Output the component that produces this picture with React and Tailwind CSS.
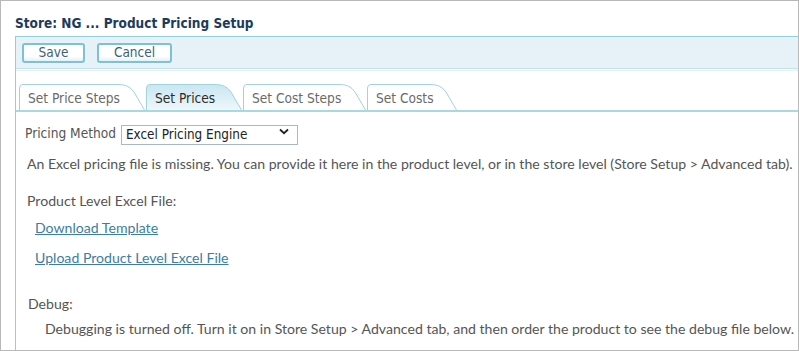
import { useState } from "react";

function Tab({ label, active, width }) {
    return (
        <div className="relative h-[26px]" style={{ width }}>
            <svg className="absolute inset-0" width={width} height="26" viewBox={`0 0 ${width} 26`}>
                <defs>
                    <linearGradient id="tabActive" x1="0" y1="0" x2="0" y2="1">
                        <stop offset="0" stopColor="#c9e6f1" />
                        <stop offset="1" stopColor="#eef7fb" />
                    </linearGradient>
                </defs>
                <path
                    d={`M0.5 26 L0.5 4 Q0.5 0.5 4 0.5 L${width - 26} 0.5 Q${width - 16} 0.5 ${width - 11} 8 L${width - 0.5} 26`}
                    fill={active ? "url(#tabActive)" : "#ffffff"}
                    stroke="#9fd3df"
                    strokeWidth="1"
                />
            </svg>
            <span
                className={`relative block pl-[9px] pt-[6px] text-[13.6px] leading-[16px] font-['DejaVu_Sans_Condensed','DejaVu_Sans',sans-serif] ${active ? "text-[#2c2c2c]" : "text-[#6a6a6a]"}`}
            >
                {label}
            </span>
        </div>
    );
}

export default function App() {
    const [method, setMethod] = useState("excel");

    return (
        <div className="w-[799px] h-[351px] border border-[#b8b8b8] bg-white overflow-hidden flex flex-col">
            {/* TITLE */}
            <div className="h-[35px] pl-[14px] pt-[15px]">
                <h1 className="text-[13.5px] leading-[15px] font-bold text-[#1d3b5c] font-['DejaVu_Sans_Condensed','DejaVu_Sans',sans-serif]">
                    Store: NG ... Product Pricing Setup
                </h1>
            </div>

            {/* PANEL */}
            <div className="ml-[14px] flex-1 border-l border-t border-[#8fd0de] flex flex-col">
                {/* TOOLBAR */}
                <div className="h-[31px] bg-[#e7f2f8] flex items-center gap-[12px] pl-[6px] pt-[1px]">
                    <button className="w-[63px] h-[20px] rounded-[3px] border-2 border-[#7cc2d4] bg-[linear-gradient(#ffffff_70%,#e3f1f6)] text-[13.5px] leading-none text-[#3d5f78] font-['DejaVu_Sans_Condensed','DejaVu_Sans',sans-serif]">
                        Save
                    </button>
                    <button className="w-[75px] h-[20px] rounded-[3px] border-2 border-[#7cc2d4] bg-[linear-gradient(#ffffff_70%,#e3f1f6)] text-[13.5px] leading-none text-[#3d5f78] font-['DejaVu_Sans_Condensed','DejaVu_Sans',sans-serif]">
                        Cancel
                    </button>
                </div>
                <div className="h-[1px] bg-[#c3e2eb]" />
                <div className="h-[1px] bg-white" />
                <div className="h-[1px] bg-[#e3f1f6]" />

                {/* TABS */}
                <div className="flex gap-[1px] pl-[3px] pt-[13px] border-b-2 border-[#a7d9e3]">
                    <Tab label="Set Price Steps" width={126} />
                    <Tab label="Set Prices" width={96} active />
                    <Tab label="Set Cost Steps" width={123} />
                    <Tab label="Set Costs" width={90} />
                </div>

                {/* CONTENT */}
                <div className="pl-[9px] pt-[11px] text-[#555] font-['Lato',sans-serif]">
                    <div className="flex items-center gap-[5px] h-[20px]">
                        <span className="text-[13.6px] text-[#555] font-['DejaVu_Sans_Condensed','DejaVu_Sans',sans-serif]">
                            Pricing Method
                        </span>
                        <div className="relative">
                            <select
                                value={method}
                                onChange={(e) => setMethod(e.target.value)}
                                className="appearance-none w-[177px] h-[20px] border border-[#a9b8c6] bg-white pl-[4px] text-[13.4px] leading-[18px] text-[#222] font-['DejaVu_Sans_Condensed','DejaVu_Sans',sans-serif]"
                            >
                                <option value="excel">Excel Pricing Engine</option>
                                <option value="steps">Price Steps</option>
                            </select>
                            <svg className="absolute right-[9px] top-[7px] pointer-events-none" width="10" height="7" viewBox="0 0 10 7">
                                <path d="M1 1.5 L5 5.2 L9 1.5" fill="none" stroke="#222" strokeWidth="1.8" />
                            </svg>
                        </div>
                    </div>

                    <p className="mt-[12px] pl-[2px] text-[14.1px] leading-[18px]">
                        An Excel pricing file is missing. You can provide it here in the product level, or in the store level (Store Setup &gt; Advanced tab).
                    </p>

                    <p className="mt-[19px] pl-[2px] text-[14.1px] leading-[18px]">Product Level Excel File:</p>

                    <div className="pl-[10px] mt-[9px] flex flex-col gap-[12px] text-[14.1px] leading-[18px]">
                        <a href="#" className="text-[#3a7ea3] underline w-fit">Download Template</a>
                        <a href="#" className="text-[#3a7ea3] underline w-fit">Upload Product Level Excel File</a>
                    </div>

                    <p className="mt-[28px] pl-[3px] text-[14.1px] leading-[18px]">
                        Debug<span className="text-[#d22]">:</span>
                    </p>
                    <p className="mt-[7px] pl-[20px] text-[14.1px] leading-[18px]">
                        Debugging is turned off. Turn it on in Store Setup &gt; Advanced tab, and then order the product to see the debug file below.
                    </p>
                </div>
            </div>
        </div>
    );
}
